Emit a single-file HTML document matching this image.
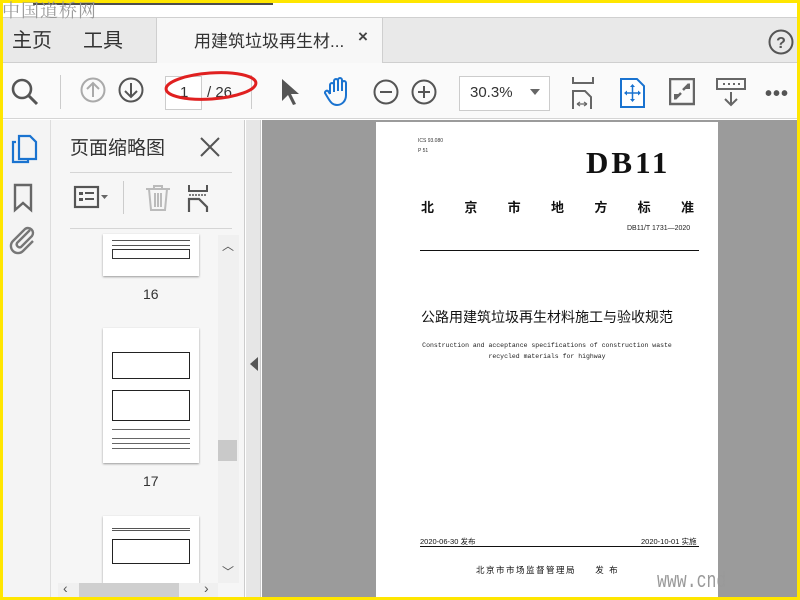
<!DOCTYPE html>
<html><head><meta charset="utf-8"><style>
*{margin:0;padding:0;box-sizing:border-box}
body{width:800px;height:600px;overflow:hidden;position:relative;background:#ffe600;font-family:"Liberation Sans","Noto Sans CJK SC",sans-serif}
.abs{position:absolute}
#app{position:absolute;left:3px;top:3px;width:794px;height:594px;background:#fff;overflow:hidden}
.ico{position:absolute}
</style></head><body>
<div id="app">
 <div class="abs" style="left:0;top:0;width:794px;height:14px;background:#fff"></div>
 <div class="abs" style="left:30px;top:-2px;width:240px;height:4px;background:#222;opacity:.8"></div>
 <!-- tab bar -->
 <div class="abs" style="left:0;top:14px;width:794px;height:46px;background:#e9e9e9;border-top:1px solid #d0d0d0;border-bottom:1px solid #cfcfcf"></div>
 <div class="abs" style="left:9px;top:21px;font-size:20px;color:#333">主页</div>
 <div class="abs" style="left:80px;top:21px;font-size:20px;color:#333">工具</div>
 <div class="abs" style="left:153px;top:15px;width:227px;height:46px;background:#f7f7f7;border-left:1px solid #cfcfcf;border-right:1px solid #cfcfcf"></div>
 <div class="abs" style="left:191px;top:24px;font-size:17px;color:#333">用建筑垃圾再生材...</div>
 <div class="abs" style="left:355px;top:24px;font-size:17px;color:#444;font-weight:bold">×</div>
 <svg class="ico" style="left:765px;top:26px" width="28" height="28"><circle cx="13" cy="13" r="11.5" fill="none" stroke="#555" stroke-width="2"/><text x="13" y="19" font-size="16" font-weight="bold" text-anchor="middle" fill="#555" font-family="Liberation Sans">?</text></svg>
 <!-- toolbar -->
 <div class="abs" style="left:0;top:60px;width:794px;height:56px;background:#fafafa;border-bottom:1px solid #d5d5d5"></div>
 <svg class="ico" style="left:7px;top:74px" width="30" height="30"><circle cx="12" cy="12" r="9" fill="none" stroke="#555" stroke-width="2.6"/><line x1="19" y1="19" x2="27" y2="27" stroke="#555" stroke-width="3"/></svg>
 <div class="abs" style="left:57px;top:72px;width:1px;height:34px;background:#ccc"></div>
 <svg class="ico" style="left:77px;top:74px" width="28" height="28"><circle cx="13" cy="13" r="11.5" fill="none" stroke="#aaa" stroke-width="2"/><path d="M13 20V6M7 12l6-6 6 6" fill="none" stroke="#aaa" stroke-width="2"/></svg>
 <svg class="ico" style="left:115px;top:74px" width="28" height="28"><circle cx="13" cy="13" r="11.5" fill="none" stroke="#555" stroke-width="2"/><path d="M13 6v14M7 14l6 6 6-6" fill="none" stroke="#555" stroke-width="2"/></svg>
 <div class="abs" style="left:162px;top:73px;width:37px;height:34px;border:1px solid #ccc;background:#fff"></div>
 <div class="abs" style="left:177px;top:81px;font-size:15px;color:#333">1</div>
 <div class="abs" style="left:204px;top:81px;font-size:15px;color:#333">/ 26</div>
 <div class="abs" style="left:248px;top:72px;width:1px;height:34px;background:#ccc"></div>
 <svg class="ico" style="left:160px;top:66px" width="98" height="34"><ellipse cx="48" cy="17" rx="45" ry="13" fill="none" stroke="#e02020" stroke-width="3" transform="rotate(-4 48 17)"/></svg>
 <svg class="ico" style="left:276px;top:74px" width="24" height="30"><path d="M3 2l17 15h-8l5 10-3 1-5-10-6 6z" fill="#555"/></svg>
 <svg class="ico" style="left:319px;top:73px" width="32" height="32"><path d="M8 18V9a2 2 0 014 0v7V5a2 2 0 014 0v10V4a2 2 0 014 0v11V7a2 2 0 014 0v12c0 6-4 10-9 10-4 0-6-2-9-7l-3-5a2 2 0 013-2l2 3" fill="none" stroke="#1a73d0" stroke-width="2"/></svg>
 <svg class="ico" style="left:370px;top:76px" width="28" height="28"><circle cx="13" cy="13" r="11.5" fill="none" stroke="#555" stroke-width="2"/><line x1="7" y1="13" x2="19" y2="13" stroke="#555" stroke-width="2"/></svg>
 <svg class="ico" style="left:408px;top:76px" width="28" height="28"><circle cx="13" cy="13" r="11.5" fill="none" stroke="#555" stroke-width="2"/><path d="M7 13h12M13 7v12" stroke="#555" stroke-width="2"/></svg>
 <div class="abs" style="left:456px;top:73px;width:91px;height:35px;border:1px solid #ccc;background:#fff"></div>
 <div class="abs" style="left:467px;top:81px;font-size:15px;color:#333">30.3%</div>
 <svg class="ico" style="left:527px;top:86px" width="10" height="8"><path d="M0 0h10L5 6z" fill="#666"/></svg>
 <svg class="ico" style="left:568px;top:74px" width="26" height="32"><path d="M2 0v6h20V0" fill="none" stroke="#666" stroke-width="2"/><path d="M2 32V14h12l6 6v12" fill="none" stroke="#666" stroke-width="2"/><path d="M6 27h10M6 27l3-2M6 27l3 2M16 27l-3-2M16 27l-3 2" stroke="#666" stroke-width="1.2"/></svg>
 <svg class="ico" style="left:617px;top:75px" width="26" height="30"><path d="M1 1h16l7 7v21H1z" fill="#fff" stroke="#1a73d0" stroke-width="2"/><path d="M12.5 7v16M5 15h15" stroke="#1a73d0" stroke-width="1.5"/><path d="M12.5 6l-2.5 3h5zM12.5 24l-2.5-3h5zM4 15l3-2.5v5zM21 15l-3-2.5v5z" fill="#1a73d0"/></svg>
 <svg class="ico" style="left:666px;top:75px" width="26" height="28"><rect x="1" y="1" width="24" height="25" fill="none" stroke="#666" stroke-width="2.5"/><path d="M6 21l6-6M20 6l-6 6" stroke="#666" stroke-width="2.5"/><path d="M5 22v-6h6zM21 5v6h-6z" fill="#666"/></svg>
 <svg class="ico" style="left:713px;top:75px" width="30" height="30"><rect x="1" y="1" width="28" height="10" fill="none" stroke="#666" stroke-width="2"/><path d="M7 6h2M12 6h2M17 6h2M22 6h2" stroke="#666" stroke-width="2"/><path d="M15 14v13M9 21l6 6 6-6" fill="none" stroke="#666" stroke-width="2"/></svg>
 <div class="abs" style="left:762px;top:80px;font-size:20px;color:#555;letter-spacing:1px;font-weight:bold">•••</div>
 <!-- left icon column -->
 <div class="abs" style="left:0;top:117px;width:48px;height:477px;background:#f4f4f4;border-right:1px solid #ddd"></div>
 <svg class="ico" style="left:8px;top:131px" width="28" height="30"><path d="M5 8H2v20h15v-3" fill="none" stroke="#1a73d0" stroke-width="2.2"/><path d="M8 2h11l6 6v17H8z" fill="none" stroke="#1a73d0" stroke-width="2.2"/></svg>
 <svg class="ico" style="left:10px;top:180px" width="22" height="30"><path d="M2 2h16v25l-8-7-8 7z" fill="none" stroke="#666" stroke-width="2.4"/></svg>
 <svg class="ico" style="left:5px;top:221px" width="30" height="32"><path d="M22 6L9 19a3 3 0 004 4l11-11a5 5 0 00-7-7L5 17a7 7 0 0010 10l10-10" fill="none" stroke="#777" stroke-width="2.4"/></svg>
 <!-- thumbnail panel -->
 <div class="abs" style="left:48px;top:117px;width:194px;height:477px;background:#f6f6f6;border-right:1px solid #ccc"></div>
 <div class="abs" style="left:67px;top:130px;font-size:19px;color:#333">页面缩略图</div>
 <svg class="ico" style="left:196px;top:133px" width="22" height="22"><path d="M2 2l18 18M20 2L2 20" stroke="#555" stroke-width="2"/></svg>
 <div class="abs" style="left:67px;top:169px;width:162px;height:1px;background:#d5d5d5"></div>
 <svg class="ico" style="left:70px;top:182px" width="40" height="26"><rect x="2" y="2" width="23" height="20" fill="none" stroke="#555" stroke-width="2.2"/><rect x="6" y="7" width="4" height="3" fill="#555"/><rect x="6" y="13" width="4" height="3" fill="#555"/><path d="M12 8h9M12 14h9" stroke="#555" stroke-width="2"/><path d="M28 10h7l-3.5 4z" fill="#666"/></svg>
 <div class="abs" style="left:120px;top:178px;width:1px;height:33px;background:#ccc"></div>
 <svg class="ico" style="left:142px;top:181px" width="26" height="28"><path d="M1 5h24M9 5V2h8v3M4 5l2 21h14l2-21M10 9v14M13 9v14M16 9v14" fill="none" stroke="#bbb" stroke-width="2"/></svg>
 <svg class="ico" style="left:184px;top:182px" width="24" height="28"><path d="M2 0v6h18V0" fill="none" stroke="#555" stroke-width="2"/><path d="M2 10h18" stroke="#555" stroke-width="1.5" stroke-dasharray="2 1"/><path d="M2 27V14h10l8 8v5" fill="none" stroke="#555" stroke-width="2.2"/></svg>
 <div class="abs" style="left:67px;top:225px;width:162px;height:1px;background:#d5d5d5"></div>
 <!-- thumbnails -->
 <div class="abs" style="left:100px;top:231px;width:96px;height:42px;background:#fff;box-shadow:0 1px 2px #999;overflow:hidden">
  <div style="margin:6px 9px 0;height:6px;border-top:1px solid #555;border-bottom:1px solid #555"></div>
  <div style="margin:3px 9px;height:10px;border:1px solid #333"></div>
 </div>
 <div class="abs" style="left:140px;top:283px;font-size:14px;color:#333">16</div>
 <div class="abs" style="left:100px;top:325px;width:96px;height:135px;background:#fff;box-shadow:0 1px 2px #999;padding:20px 9px 0">
  <div style="height:27px;border:1px solid #222;margin-top:4px"></div>
  <div style="height:31px;border:1px solid #222;margin-top:11px"></div>
  <div style="height:1px;background:#666;margin-top:8px"></div>
  <div style="height:1px;background:#666;margin-top:8px"></div>
  <div style="height:1px;background:#666;margin-top:4px"></div>
  <div style="height:1px;background:#666;margin-top:4px"></div>
 </div>
 <div class="abs" style="left:140px;top:470px;font-size:14px;color:#333">17</div>
 <div class="abs" style="left:100px;top:513px;width:96px;height:67px;background:#fff;box-shadow:0 1px 2px #999;padding:12px 9px 0">
  <div style="height:3px;border-top:1px solid #555;border-bottom:1px solid #555"></div>
  <div style="height:25px;border:1px solid #222;margin-top:8px"></div>
 </div>
 <div class="abs" style="left:215px;top:232px;width:21px;height:348px;background:#f0f0f0"></div>
 <div class="abs" style="left:219px;top:234px;font-size:12px;color:#555">︿</div>
 <div class="abs" style="left:219px;top:560px;font-size:12px;color:#555">﹀</div>
 <div class="abs" style="left:215px;top:437px;width:19px;height:21px;background:#c9c9c9"></div>
 <div class="abs" style="left:55px;top:580px;width:160px;height:14px;background:#f0f0f0"></div>
 <div class="abs" style="left:76px;top:580px;width:100px;height:14px;background:#cfcfcf"></div>
 <div class="abs" style="left:60px;top:577px;font-size:14px;color:#555">‹</div>
 <div class="abs" style="left:201px;top:577px;font-size:14px;color:#555">›</div>
 <div class="abs" style="left:243px;top:117px;width:15px;height:477px;background:#e6e6e6;border-right:1px solid #ccc"></div>
 <svg class="ico" style="left:246px;top:353px" width="10" height="16"><path d="M9 1v14L1 8z" fill="#555"/></svg>
 <!-- document area -->
 <div class="abs" style="left:259px;top:117px;width:535px;height:477px;background:#9b9b9b"></div>
 <div class="abs" style="left:373px;top:119px;width:342px;height:475px;background:#fff;font-family:'Liberation Sans','Noto Sans CJK SC',sans-serif">
  <div class="abs" style="left:42px;top:16px;font-size:5px;color:#333">ICS 93.080</div>
  <div class="abs" style="left:42px;top:26px;font-size:5px;color:#333">P 51</div>
  <div class="abs" style="left:210px;top:23px;font-size:31px;font-weight:bold;font-family:'Liberation Serif',serif;color:#111;letter-spacing:3px">DB11</div>
  <div class="abs" style="left:45px;top:75px;width:273px;display:flex;justify-content:space-between;font-size:13px;font-weight:bold;color:#111"><span>北</span><span>京</span><span>市</span><span>地</span><span>方</span><span>标</span><span>准</span></div>
  <div class="abs" style="left:251px;top:103px;font-size:7px;color:#222">DB11/T 1731—2020</div>
  <div class="abs" style="left:44px;top:128px;width:279px;height:1px;background:#111"></div>
  <div class="abs" style="left:0;top:185px;width:342px;text-align:center;font-size:14px;color:#111">公路用建筑垃圾再生材料施工与验收规范</div>
  <div class="abs" style="left:0;top:218px;width:342px;text-align:center;font-size:6.5px;line-height:11px;color:#222;font-family:'Liberation Mono',monospace">Construction and acceptance specifications of construction waste<br>recycled materials for highway</div>
  <div class="abs" style="left:44px;top:414px;font-size:7.5px;color:#111">2020-06-30 发布</div>
  <div class="abs" style="left:265px;top:414px;font-size:7.5px;color:#111">2020-10-01 实施</div>
  <div class="abs" style="left:44px;top:424px;width:279px;height:1px;background:#111"></div>
  <div class="abs" style="left:100px;top:442px;font-size:8.5px;color:#111;letter-spacing:1.5px">北京市市场监督管理局&nbsp;&nbsp;&nbsp;&nbsp; 发 布</div>
 </div>
 <div class="abs" style="left:654px;top:566px;font-size:22px;color:#999;font-family:'Liberation Mono',monospace;transform:scaleX(.75);transform-origin:left">www.cnd</div>
</div>
<div class="abs" style="left:2px;top:0px;font-size:18px;line-height:20px;color:#9a9a9a;font-family:'Noto Serif CJK SC',serif;letter-spacing:1px">中国道桥网</div>
</body></html>
